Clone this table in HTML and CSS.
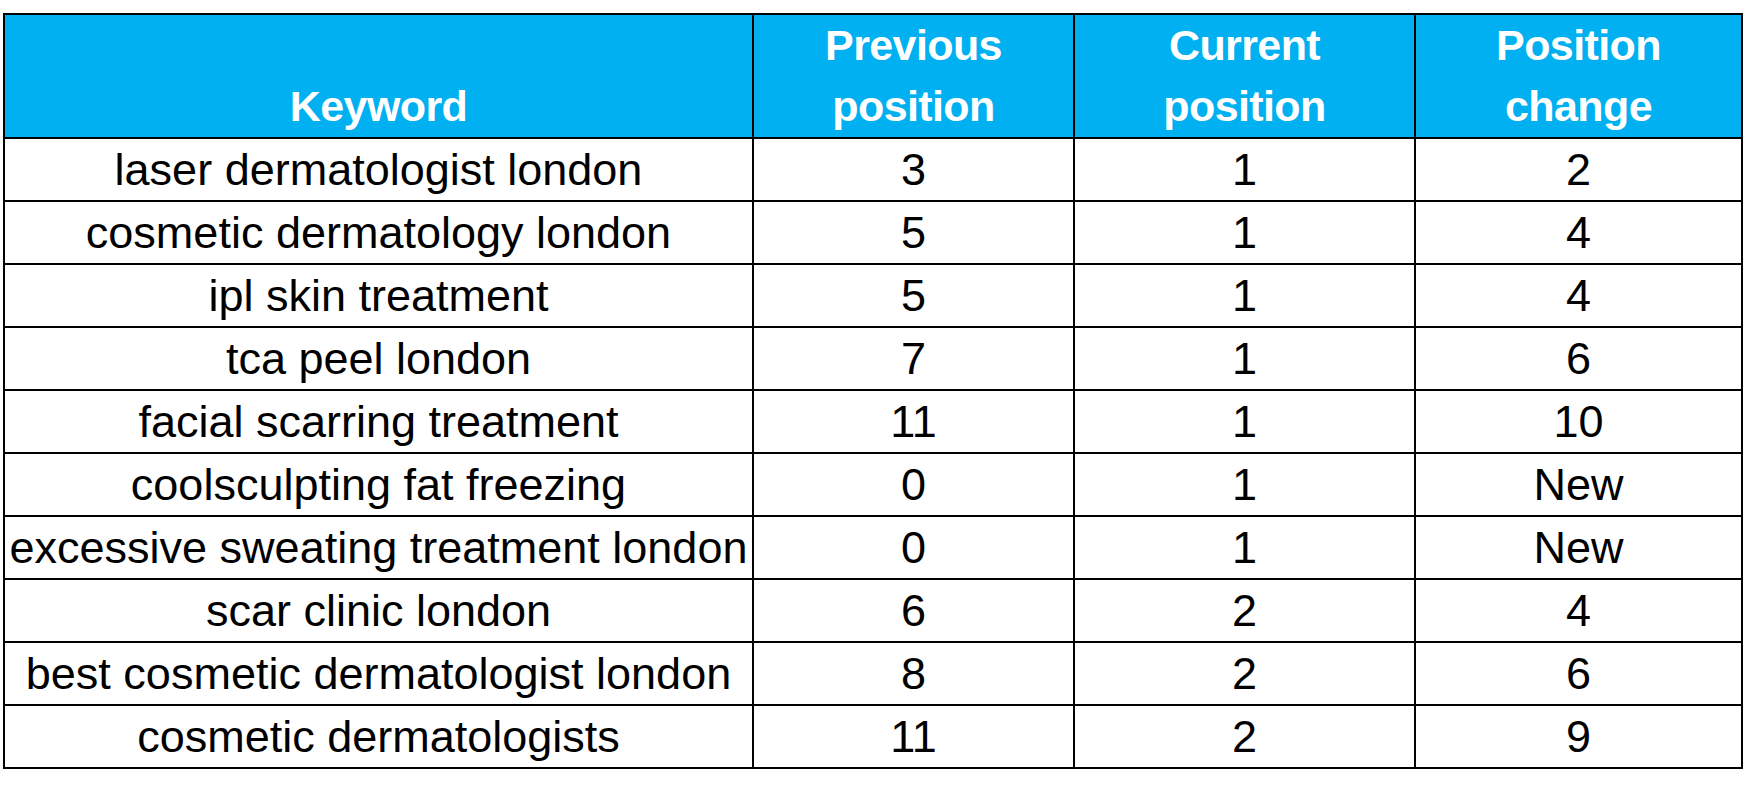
FILE: index.html
```html
<!DOCTYPE html>
<html>
<head>
<meta charset="utf-8">
<link rel="stylesheet" href="styles.css">
</head>
<body>
<table class="rank">
  <colgroup>
    <col class="c1"><col class="c2"><col class="c3"><col class="c4">
  </colgroup>
  <thead>
    <tr>
      <th>Keyword</th>
      <th>Previous<br>position</th>
      <th>Current<br>position</th>
      <th>Position<br>change</th>
    </tr>
  </thead>
  <tbody>
    <tr><td>laser dermatologist london</td><td>3</td><td>1</td><td>2</td></tr>
    <tr><td>cosmetic dermatology london</td><td>5</td><td>1</td><td>4</td></tr>
    <tr><td>ipl skin treatment</td><td>5</td><td>1</td><td>4</td></tr>
    <tr><td>tca peel london</td><td>7</td><td>1</td><td>6</td></tr>
    <tr><td>facial scarring treatment</td><td>11</td><td>1</td><td>10</td></tr>
    <tr><td>coolsculpting fat freezing</td><td>0</td><td>1</td><td>New</td></tr>
    <tr><td>excessive sweating treatment london</td><td>0</td><td>1</td><td>New</td></tr>
    <tr><td>scar clinic london</td><td>6</td><td>2</td><td>4</td></tr>
    <tr><td>best cosmetic dermatologist london</td><td>8</td><td>2</td><td>6</td></tr>
    <tr><td>cosmetic dermatologists</td><td>11</td><td>2</td><td>9</td></tr>
  </tbody>
</table>
</body>
</html>
```
FILE: styles.css
```css
html, body {
  margin: 0;
  padding: 0;
  background: #ffffff;
}

body {
  padding: 13px 0 0 3px;
  font-family: "Liberation Sans", Arial, sans-serif;
}

.rank {
  border-collapse: collapse;
  table-layout: fixed;
  width: 1738px;
  color: #000000;
}

.c1 { width: 749px; }
.c2 { width: 321px; }
.c3 { width: 341px; }
.c4 { width: 327px; }

.rank th,
.rank td {
  border: 2px solid #000000;
  padding: 0;
  text-align: center;
  white-space: nowrap;
  overflow: hidden;
}

.rank th {
  background: #00b0f0;
  color: #ffffff;
  font-weight: bold;
  font-size: 43px;
  line-height: 61px;
  height: 122px;
  vertical-align: bottom;
  letter-spacing: -0.6px;
}

.rank td {
  font-size: 45px;
  line-height: 61px;
  height: 61px;
  vertical-align: middle;
}
```
